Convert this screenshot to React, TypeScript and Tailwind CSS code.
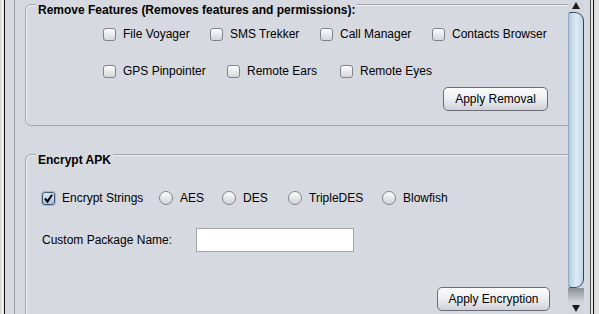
import React from "react";

const font = "font-['Liberation_Sans',Arial,sans-serif]";

function CheckBox({ checked = false }: { checked?: boolean }) {
  return checked ? (
    <span className="relative flex h-[13px] w-[13px] shrink-0 items-center justify-center rounded-[3px] border border-[#3e5a78] bg-gradient-to-b from-[#dfe9f3] to-[#a9c1d9] shadow-[0_0_0_1px_#9fb7cf]">
      <svg width="11" height="11" viewBox="0 0 11 11">
        <path d="M2 5.5 L4.5 8.5 L9 1.8" fill="none" stroke="#000" strokeWidth="2" />
      </svg>
    </span>
  ) : (
    <span className="block h-[13px] w-[13px] shrink-0 rounded-[3px] border border-[#7f848b] bg-gradient-to-b from-[#fdfdfd] to-[#d4d7dc]" />
  );
}

function Radio() {
  return (
    <span className="block h-[14px] w-[14px] shrink-0 rounded-full border border-[#7f848b] bg-gradient-to-b from-[#fdfdfd] to-[#d0d3d8]" />
  );
}

function Item({
  label,
  width,
  kind = "check",
  checked = false,
}: {
  label: string;
  width: number;
  kind?: "check" | "radio";
  checked?: boolean;
}) {
  return (
    <div className="flex h-[14px] shrink-0 items-center gap-[7px]" style={{ width }}>
      {kind === "check" ? <CheckBox checked={checked} /> : <Radio />}
      <span className="whitespace-nowrap text-[12px] leading-[14px] text-black">{label}</span>
    </div>
  );
}

function Button({ label, width, ml }: { label: string; width: number; ml: number }) {
  return (
    <div
      className="flex h-[24px] items-center justify-center rounded-[5px] border border-[#6a6e74] bg-gradient-to-b from-[#fcfcfd] via-[#eceef1] to-[#cfd2d8] text-[12px] leading-[14px] text-black"
      style={{ width, marginLeft: ml }}
    >
      {label}
    </div>
  );
}

export default function App() {
  return (
    <div className={`flex h-[314px] w-[599px] overflow-hidden bg-[#d6d9df] ${font}`}>
      {/* left frame */}
      <div className="flex h-full shrink-0">
        <div className="h-full w-[2px] bg-[#dcdcdc]" />
        <div className="h-full w-[1px] bg-[#fafafa]" />
        <div className="h-full w-[1px] bg-[#e4e4e4]" />
        <div className="h-full w-[1px] bg-[#111]" />
        <div className="h-full w-[9px] bg-[#d6d9df]" />
        <div className="h-full w-[1px] bg-[#9a9ea6]" />
      </div>

      {/* viewport */}
      <div className="h-full w-[553px] shrink-0 overflow-hidden pl-[10px] pt-[4px]">
        {/* Remove Features group */}
        <div className="relative flex h-[122px] w-[560px] flex-col rounded-[6px] border border-[#a2a6ad] pt-[22px] shadow-[inset_1px_1px_0_#eef0f3]">
          <span className="absolute left-[10px] top-[-2px] bg-[#d6d9df] px-[2px] text-[12px] font-bold leading-[14px] text-black">
            Remove Features (Removes features and permissions):
          </span>
          <div className="flex pl-[77px]">
            <Item label="File Voyager" width={107} />
            <Item label="SMS Trekker" width={110} />
            <Item label="Call Manager" width={112} />
            <Item label="Contacts Browser" width={120} />
          </div>
          <div className="mt-[23px] flex pl-[77px]">
            <Item label="GPS Pinpointer" width={124} />
            <Item label="Remote Ears" width={113} />
            <Item label="Remote Eyes" width={100} />
          </div>
          <div className="mt-[9px] flex">
            <Button label="Apply Removal" width={105} ml={417} />
          </div>
        </div>

        {/* Encrypt APK group */}
        <div className="relative mt-[28px] flex h-[200px] w-[560px] flex-col rounded-[6px] border border-[#a2a6ad] pt-[36px] shadow-[inset_1px_1px_0_#eef0f3]">
          <span className="absolute left-[10px] top-[-2px] bg-[#d6d9df] px-[2px] text-[12px] font-bold leading-[14px] text-black">
            Encrypt APK
          </span>
          <div className="flex pl-[16px]">
            <Item label="Encrypt Strings" width={117} checked />
            <Item label="AES" width={63} kind="radio" />
            <Item label="DES" width={66} kind="radio" />
            <Item label="TripleDES" width={94} kind="radio" />
            <Item label="Blowfish" width={80} kind="radio" />
          </div>
          <div className="mt-[23px] flex h-[24px] items-center pl-[16px]">
            <span className="w-[154px] text-[12px] leading-[14px] text-black">Custom Package Name:</span>
            <div className="h-[24px] w-[158px] border border-[#a3a7ad] bg-white" />
          </div>
          <div className="mt-[35px] flex">
            <Button label="Apply Encryption" width={113} ml={411} />
          </div>
        </div>
      </div>

      {/* scrollbar */}
      <div className="flex h-full w-[16px] shrink-0 flex-col bg-[#d3d6dc]">
        <div className="flex h-[12px] items-start justify-center pt-[2px]">
          <svg width="8" height="7" viewBox="0 0 8 7">
            <path d="M4 0 L8 7 L0 7 Z" fill="#1a1a1a" />
          </svg>
        </div>
        <div className="h-[276px] rounded-r-[9px] rounded-l-[3px] border border-l-[#8fa7bf] border-t-[#33506e] border-r-[#2b4563] border-b-[#33506e] bg-gradient-to-r from-[#b3cbe0] via-[#dcebf6] to-[#c2d8ea]" />
        <div className="h-[14px] bg-gradient-to-b from-[#8d9197] to-[#d3d6dc]" />
        <div className="flex flex-1 items-end justify-center pb-[2px]">
          <svg width="8" height="7" viewBox="0 0 8 7">
            <path d="M0 0 L8 0 L4 7 Z" fill="#1a1a1a" />
          </svg>
        </div>
      </div>

      {/* right frame */}
      <div className="flex h-full flex-1">
        <div className="h-full w-[6px] bg-[#d6d9df]" />
        <div className="h-full w-[1px] bg-[#4a4a4a]" />
        <div className="h-full w-[2px] bg-[#e8e8e8]" />
        <div className="h-full w-[1px] bg-[#111]" />
        <div className="h-full flex-1 bg-[#e0e0e0]" />
      </div>
    </div>
  );
}
